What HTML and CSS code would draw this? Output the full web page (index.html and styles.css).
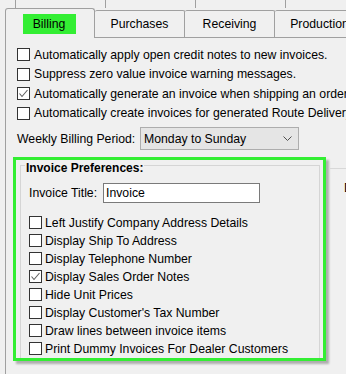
FILE: index.html
```html
<!DOCTYPE html>
<html>
<head>
<meta charset="utf-8">
<link rel="stylesheet" href="styles.css">
</head>
<body>
<div class="backrow"><span class="backtab"></span><span class="backtab"></span><span class="backtab"></span><span class="backtab"></span></div>
<div class="tabs">
  <div class="tab sel"><span class="hl">Billing</span></div>
  <div class="tab">Purchases</div>
  <div class="tab">Receiving</div>
  <div class="tab">Production</div>
</div>
<div class="panel">
  <div class="opts">
    <div class="opt"><span class="cb"></span><span>Automatically apply open credit notes to new invoices.</span></div>
    <div class="opt"><span class="cb"></span><span>Suppress zero value invoice warning messages.</span></div>
    <div class="opt"><span class="cb"><svg width="11" height="11" viewBox="0 0 11 11"><polyline points="1.5,5.5 4,8.5 9.5,2" fill="none" stroke="#606060" stroke-width="1.1"/></svg></span><span>Automatically generate an invoice when shipping an order</span></div>
    <div class="opt"><span class="cb"></span><span>Automatically create invoices for generated Route Delivery</span></div>
  </div>
  <div class="period">
    <span class="plabel">Weekly Billing Period:</span>
    <div class="select"><span class="seltext">Monday to Sunday</span><svg class="chev" width="9" height="6" viewBox="0 0 9 6"><polyline points="0.5,0.5 4.5,4.5 8.5,0.5" fill="none" stroke="#505050" stroke-width="1"/></svg></div>
  </div>
  <div class="lower">
    <div class="green">
      <div class="group">
        <span class="legend">Invoice Preferences:</span>
        <div class="titlerow"><span class="tlabel">Invoice Title:</span><div class="input">Invoice</div></div>
        <div class="gopts">
          <div class="opt g"><span class="cb"></span><span>Left Justify Company Address Details</span></div>
          <div class="opt g"><span class="cb"></span><span>Display Ship To Address</span></div>
          <div class="opt g"><span class="cb"></span><span>Display Telephone Number</span></div>
          <div class="opt g"><span class="cb"><svg width="11" height="11" viewBox="0 0 11 11"><polyline points="1.5,5.5 4,8.5 9.5,2" fill="none" stroke="#606060" stroke-width="1.1"/></svg></span><span>Display Sales Order Notes</span></div>
          <div class="opt g"><span class="cb"></span><span>Hide Unit Prices</span></div>
          <div class="opt g"><span class="cb"></span><span>Display Customer's Tax Number</span></div>
          <div class="opt g"><span class="cb"></span><span>Draw lines between invoice items</span></div>
          <div class="opt g"><span class="cb"></span><span>Print Dummy Invoices For Dealer Customers</span></div>
        </div>
      </div>
    </div>
    <div class="side"><span class="sidetext">D</span></div>
  </div>
</div>
</body>
</html>
```
FILE: styles.css
```css
html, body {
  margin: 0;
  padding: 0;
}
body {
  width: 346px;
  height: 374px;
  overflow: hidden;
  background: #f0f0f0;
  font-family: "Liberation Sans", Arial, sans-serif;
  font-size: 12.25px;
  color: #000;
}
.backrow {
  display: flex;
  height: 8px;
  padding-left: 15px;
}
.backtab {
  flex: none;
  width: 90px;
  box-sizing: border-box;
  border-left: 1px solid #a0a0a0;
}
.tabs {
  display: flex;
  align-items: flex-end;
  height: 29px;
  padding-left: 5px;
}
.tab {
  flex: none;
  width: 90px;
  height: 27px;
  box-sizing: border-box;
  border-top: 1px solid #a0a0a0;
  border-right: 1px solid #a0a0a0;
  border-radius: 2px 2px 0 0;
  display: flex;
  align-items: center;
  justify-content: center;
  white-space: nowrap;
  overflow: hidden;
}
.tab.sel {
  height: 30px;
  margin-bottom: -1px;
  border-left: 1px solid #a0a0a0;
  background: #f0f0f0;
  position: relative;
  z-index: 1;
  padding-top: 1px;
  border-radius: 3px 3px 0 0;
}
.hl {
  display: flex;
  align-items: center;
  justify-content: center;
  width: 53px;
  height: 20px;
  background: #33ee33;
  margin-right: 2px;
}
.panel {
  margin-left: 5px;
  border-left: 1px solid #a0a0a0;
  border-top: 1px solid #a0a0a0;
  padding: 7px 0 0 7px;
  height: 340px;
  box-sizing: border-box;
}
.opts {
  padding-left: 4px;
}
.opt {
  display: flex;
  align-items: center;
  gap: 4px;
  height: 19.5px;
  white-space: nowrap;
}
.cb {
  flex: none;
  width: 13px;
  height: 13px;
  box-sizing: border-box;
  border: 1px solid #333;
  background: #fff;
  display: flex;
  align-items: center;
  justify-content: center;
}
.period {
  display: flex;
  align-items: center;
  margin-top: 4px;
  height: 23px;
  padding-left: 4px;
}
.plabel {
  width: 123px;
  flex: none;
}
.select {
  width: 159px;
  height: 23px;
  box-sizing: border-box;
  border: 1px solid #adadad;
  background: #e5e5e5;
  display: flex;
  align-items: center;
  padding-left: 3px;
  padding-right: 6px;
}
.seltext {
  flex: 1;
}
.lower {
  display: flex;
  margin-top: 7px;
}
.green {
  flex: none;
  width: 313px;
  height: 204px;
  box-sizing: border-box;
  border: 3px solid #33ee33;
  box-shadow: 3px 3px 2px rgba(0, 0, 0, 0.28);
  padding: 5px 3px 0 4px;
  overflow: hidden;
}
.group {
  border: 1px solid #d5d5d5;
  height: 200px;
  box-sizing: border-box;
}
.legend {
  display: block;
  width: max-content;
  margin: -5px 0 0 4px;
  padding: 0 1px;
  background: #f0f0f0;
  font-weight: bold;
  font-size: 12px;
  line-height: 14px;
}
.titlerow {
  display: flex;
  align-items: center;
  height: 20px;
  margin-top: 8px;
  padding-left: 8px;
}
.tlabel {
  width: 74px;
  flex: none;
}
.input {
  width: 157px;
  height: 20px;
  box-sizing: border-box;
  border: 1px solid #7a7a7a;
  background: #fff;
  padding-left: 2px;
  line-height: 18px;
}
.gopts {
  margin-top: 10.5px;
  padding-left: 8px;
}
.opt.g {
  height: 18px;
  gap: 3px;
}
.side {
  flex: 1;
  margin-left: 4px;
  margin-top: 11px;
  border-top: 1px solid #d8d8d8;
  padding-left: 14px;
  padding-top: 12px;
  white-space: nowrap;
  overflow: hidden;
}
.sidetext {
  line-height: 14px;
}
```
